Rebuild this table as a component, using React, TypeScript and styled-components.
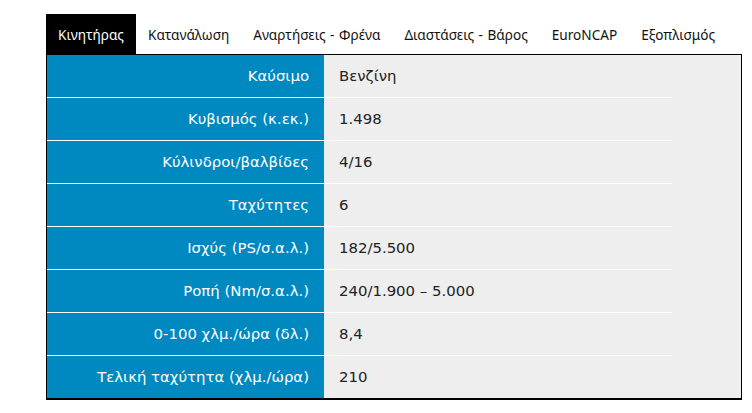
import React, { useState } from 'react';
import styled, { createGlobalStyle } from 'styled-components';

const GlobalStyle = createGlobalStyle`
  body {
    margin: 0;
    background: #ffffff;
  }
`;

const Page = styled.div`
  padding: 14px 10px 0 46px;
`;

const TabBar = styled.ul`
  display: flex;
  list-style: none;
  margin: 0;
  padding: 0;
`;

const Tab = styled.li<{ $active?: boolean }>`
  height: 40px;
  display: flex;
  align-items: center;
  padding: 1px 12px 0;
  box-sizing: border-box;
  font-family: 'Noto Sans', 'DejaVu Sans', sans-serif;
  font-size: 13.6px;
  word-spacing: 1px;
  cursor: pointer;
  color: ${(p) => (p.$active ? '#ffffff' : '#111111')};
  background: ${(p) => (p.$active ? '#000000' : 'transparent')};
`;

const Panel = styled.div`
  border: 1px solid #000000;
  border-bottom-width: 2px;
  background: #eeeeee;
`;

const SpecTable = styled.table`
  width: 90%;
  border-collapse: collapse;
  table-layout: fixed;
  font-family: 'DejaVu Sans', Verdana, sans-serif;
  font-size: 14.9px;
`;

const Row = styled.tr`
  & + & td,
  & + & th {
    border-top: 1px solid #ffffff;
  }
`;

const Label = styled.th`
  width: 262px;
  height: 42px;
  padding: 0 15px 0 0;
  background: #0088c0;
  color: #ffffff;
  font-weight: normal;
  text-align: right;
`;

const Value = styled.td`
  padding: 0 0 0 15px;
  color: #222222;
  text-align: left;
`;

const tabs = [
  'Κινητήρας',
  'Κατανάλωση',
  'Αναρτήσεις - Φρένα',
  'Διαστάσεις - Βάρος',
  'EuroNCAP',
  'Εξοπλισμός',
];

const specs: [string, string][] = [
  ['Καύσιμο', 'Βενζίνη'],
  ['Κυβισμός (κ.εκ.)', '1.498'],
  ['Κύλινδροι/βαλβίδες', '4/16'],
  ['Ταχύτητες', '6'],
  ['Ισχύς (PS/σ.α.λ.)', '182/5.500'],
  ['Ροπή (Nm/σ.α.λ.)', '240/1.900 – 5.000'],
  ['0-100 χλμ./ώρα (δλ.)', '8,4'],
  ['Τελική ταχύτητα (χλμ./ώρα)', '210'],
];

const App: React.FC = () => {
  const [active, setActive] = useState(0);

  return (
    <Page>
      <GlobalStyle />
      <TabBar>
        {tabs.map((t, i) => (
          <Tab key={t} $active={i === active} onClick={() => setActive(i)}>
            {t}
          </Tab>
        ))}
      </TabBar>
      <Panel>
        <SpecTable>
          <tbody>
            {specs.map(([k, v]) => (
              <Row key={k}>
                <Label>{k}</Label>
                <Value>{v}</Value>
              </Row>
            ))}
          </tbody>
        </SpecTable>
      </Panel>
    </Page>
  );
};

export default App;
